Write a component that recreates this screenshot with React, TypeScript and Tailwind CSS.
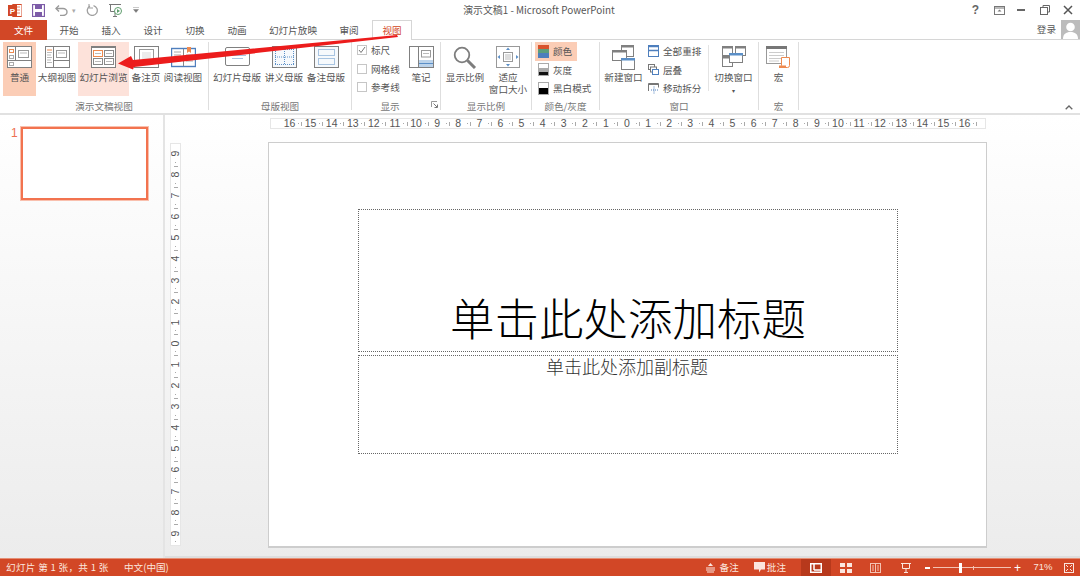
import React from "react";

const G = "#808080";
const O = "#ee8a4f";
const B = "#5b8fc7";

function Ico({ w = 25, h = 22, children }: { w?: number; h?: number; children: React.ReactNode }) {
  return (
    <svg width={w} height={h} viewBox={`0 0 ${w} ${h}`} className="block shrink-0" fill="none">
      {children}
    </svg>
  );
}

const Frame = () => <rect x="0.5" y="0.5" width="24" height="21" fill="#fff" stroke={G} />;

const icons: Record<string, React.ReactNode> = {
  normal: (
    <Ico>
      <Frame />
      <path d="M8.5 1v13M1 14.5h23" stroke={G} />
      <rect x="2.5" y="3.5" width="4" height="3" stroke={O} />
      <rect x="2.5" y="9.5" width="4" height="3" stroke="#aaa" />
      <rect x="2.5" y="16.5" width="4" height="3" stroke="#aaa" />
      <rect x="11.5" y="4.5" width="10" height="7" stroke="#999" />
      <path d="M13 7h7" stroke="#bbb" />
    </Ico>
  ),
  outline: (
    <Ico>
      <Frame />
      <path d="M8.5 1v20M9 14.5h15" stroke={G} />
      <path d="M2 4h5" stroke={O} />
      <path d="M2 6.5h5M2 9h4M2 11.5h5M2 14h4M2 16.5h5" stroke="#bbb" />
      <rect x="11.5" y="4.5" width="10" height="7" stroke="#999" />
      <path d="M13 7h7" stroke="#bbb" />
    </Ico>
  ),
  sorter: (
    <Ico>
      <rect x="0.5" y="0.5" width="24" height="21" fill="#fff" stroke={G} />
      <rect x="0" y="0" width="25" height="2" fill={G} />
      <rect x="2.5" y="4.5" width="9" height="6" stroke={O} />
      <rect x="13.5" y="4.5" width="9" height="6" stroke="#888" />
      <rect x="2.5" y="12.5" width="9" height="6" stroke="#888" />
      <rect x="13.5" y="12.5" width="9" height="6" stroke="#888" />
      <path d="M4 7.5h6M15 7.5h6M4 15.5h6M15 15.5h6" stroke="#bbb" />
    </Ico>
  ),
  notes: (
    <Ico>
      <Frame />
      <rect x="5.5" y="3.5" width="14" height="12" stroke="#999" />
      <rect x="8" y="6" width="9" height="7" fill="#ececec" />
    </Ico>
  ),
  reading: (
    <Ico>
      <rect x="0.5" y="2.5" width="24" height="18" fill="#fff" stroke="#4f7fbd" strokeWidth="1.4" />
      <path d="M12.5 3v17" stroke="#888" />
      <path d="M3 6h7M3 9h7M3 12h7M3 15h7M15 9h7M15 12h7M15 15h7" stroke="#aaa" />
      <path d="M16 1h4v6l-2-1.5L16 7z" fill={O} />
    </Ico>
  ),
  master: (
    <Ico>
      <rect x="0.5" y="1.5" width="24" height="18" rx="1.5" fill="#fff" stroke={G} />
      <path d="M4 6h17" stroke={B} />
      <path d="M4 9.5h17M7 12.5h11" stroke="#a9c4e2" />
    </Ico>
  ),
  handout: (
    <Ico>
      <rect x="0.5" y="0.5" width="24" height="21" fill="#f6f9fc" stroke={G} />
      <path d="M3.5 3v16M12.5 3v16M21.5 3v16M3 3.5h19M3 11h19M3 18.5h19" stroke={B} strokeDasharray="1 1" />
    </Ico>
  ),
  notesMaster: (
    <Ico>
      <rect x="0.5" y="0.5" width="24" height="21" fill="#f6f9fc" stroke={G} />
      <rect x="4.5" y="3.5" width="16" height="6" stroke={B} strokeDasharray="1 1" />
      <rect x="4.5" y="12.5" width="16" height="6" stroke={B} strokeDasharray="1 1" />
    </Ico>
  ),
  note: (
    <Ico>
      <Frame />
      <path d="M9.5 1v20" stroke={G} />
      <rect x="10" y="14" width="14" height="7" fill="#bcd3ea" />
      <path d="M10 17.5h14" stroke={B} />
      <rect x="12.5" y="4.5" width="9" height="6.5" stroke="#999" />
      <path d="M14 7.5h6" stroke="#bbb" />
    </Ico>
  ),
  zoom: (
    <Ico w={24} h={23}>
      <circle cx="9" cy="9" r="7.3" stroke="#7d7d7d" strokeWidth="1.8" fill="#fff" />
      <path d="M14.5 14.5l7.5 7.5" stroke="#7d7d7d" strokeWidth="3" />
    </Ico>
  ),
  fit: (
    <Ico w={24} h={22}>
      <rect x="0.5" y="0.5" width="23" height="21" fill="#fff" stroke="#999" />
      <rect x="7.5" y="6.5" width="9" height="9" stroke="#999" />
      <path d="M9 9h6M9 11h6M9 13h6" stroke="#bbb" />
      <path d="M12 1.5l2 2.5h-4zM12 20.5l2-2.500h-4zM1.500 11l2.500-2v4zM22.500 11l-2.500-2v4z" fill={B} />
    </Ico>
  ),
  newWin: (
    <Ico w={23} h={25}>
      <rect x="9.500" y="0.500" width="12" height="11" fill="#fff" stroke={G} />
      <rect x="9" y="0" width="13" height="2.500" fill={G} />
      <rect x="0.500" y="5.500" width="14" height="10" fill="#fff" stroke={G} />
      <rect x="0" y="5" width="15" height="2.500" fill={G} />
      <rect x="9.500" y="13.500" width="13" height="11" fill="#fff" stroke={G} />
      <rect x="9" y="13" width="14" height="2.500" fill={B} />
    </Ico>
  ),
  switchWin: (
    <Ico w={24} h={21}>
      <rect x="0.500" y="0.500" width="10" height="9" fill="#fff" stroke={G} />
      <rect x="0" y="0" width="11" height="2.500" fill={G} />
      <rect x="13.500" y="0.500" width="10" height="9" fill="#fff" stroke={G} />
      <rect x="13" y="0" width="11" height="2.500" fill={G} />
      <rect x="0.500" y="10.500" width="10" height="10" fill="#fff" stroke={G} />
      <rect x="0" y="10" width="11" height="2.500" fill={G} />
      <rect x="7.500" y="7.500" width="13" height="9" fill="#fff" stroke={G} />
      <rect x="7" y="7" width="14" height="2.500" fill={B} />
    </Ico>
  ),
  macro: (
    <Ico w={25} h={22}>
      <rect x="0.500" y="0.500" width="20" height="17" fill="#fff" stroke="#999" />
      <rect x="0" y="0" width="21" height="3" fill="#777" />
      <path d="M3 6.500h15M3 9.500h15M3 12.500h12M3 15h10" stroke="#ccc" />
      <path d="M15.500 11.500h8v8q0 2-2 2h-8q2-.5 2-2z" fill="#fff" stroke={O} />
      <rect x="13" y="19.500" width="7" height="2.500" fill={O} />
    </Ico>
  ),
};

function Big({
  w,
  label,
  icon,
  bg = "",
  second,
}: {
  w: string;
  label: string;
  icon: string;
  bg?: string;
  second?: string;
}) {
  return (
    <div className={`${w} ${bg} h-[54px] shrink-0 flex flex-col items-center pt-[4px]`}>
      <div className="h-[22px] flex items-center justify-center">{icons[icon]}</div>
      <div className="mt-[3px] leading-[12px] whitespace-nowrap">{label}</div>
      {second ? <div className="leading-[12px] whitespace-nowrap">{second}</div> : null}
    </div>
  );
}

function Group({
  w,
  label,
  labelClass = "",
  children,
}: {
  w: string;
  label: string;
  labelClass?: string;
  children: React.ReactNode;
}) {
  return (
    <div className={`${w} shrink-0 h-[68px] flex flex-col relative border-r border-[#dedede]`}>
      <div className="h-[57px] flex shrink-0">{children}</div>
      <div className={`mt-auto mb-[1px] leading-[14px] text-center text-[#777] ${labelClass}`}>{label}</div>
    </div>
  );
}

function Check({ label, checked }: { label: string; checked?: boolean }) {
  return (
    <div className="h-[18.500px] flex items-center gap-[4px] whitespace-nowrap">
      <span className="w-[10px] h-[10px] border border-[#c6c6c6] flex items-center justify-center">
        {checked ? (
          <svg width="8" height="8" viewBox="0 0 8 8" fill="none">
            <path d="M1 4l2 2.500L7 1" stroke="#777" strokeWidth="1" />
          </svg>
        ) : null}
      </span>
      {label}
    </div>
  );
}

function Swatch({ stops, border = "" }: { stops: [string, number][]; border?: string }) {
  return (
    <span className={`w-[11px] h-[13px] flex flex-col shrink-0 ${border}`}>
      {stops.map(([c, f], i) => (
        <span key={i} style={{ background: c, flex: f }} />
      ))}
    </span>
  );
}

function SmallRow({ icon, label, bg = "", w = "" }: { icon: React.ReactNode; label: string; bg?: string; w?: string }) {
  return (
    <div className={`h-[18.500px] flex items-center gap-[4px] whitespace-nowrap ${bg} ${w}`}>
      {icon}
      {label}
    </div>
  );
}

const HNums = [16, 15, 14, 13, 12, 11, 10, 9, 8, 7, 6, 5, 4, 3, 2, 1, 0, 1, 2, 3, 4, 5, 6, 7, 8, 9, 10, 11, 12, 13, 14, 15, 16];
const VNums = [9, 8, 7, 6, 5, 4, 3, 2, 1, 0, 1, 2, 3, 4, 5, 6, 7, 8, 9];

function HRuler() {
  return (
    <div className="w-[716px] h-[11px] ml-[105px] bg-white border border-[#e6e6e6] flex items-center pl-[12px] overflow-hidden">
      {HNums.map((n, i) => (
        <React.Fragment key={i}>
          <span className="w-[13px] shrink-0 text-center">{n}</span>
          <span className="w-[8.100px] shrink-0 flex items-center justify-around px-[1px]">
            <span className="w-px h-[1px] bg-[#aaa]" />
            <span className="w-px h-[4px] bg-[#aaa]" />
          </span>
        </React.Fragment>
      ))}
    </div>
  );
}

function VRuler() {
  return (
    <div className="w-[11px] h-[403px] ml-[5px] bg-white border border-[#e6e6e6] flex flex-col items-center pt-[4px] shrink-0 overflow-hidden">
      {VNums.map((n, i) => (
        <React.Fragment key={i}>
          <span className="h-[11px] shrink-0 -rotate-90 leading-[11px]">{n}</span>
          <span className="h-[10.100px] shrink-0 flex flex-col items-center justify-around py-[1px]">
            <span className="w-[1px] h-px bg-[#aaa]" />
            <span className="w-[4px] h-px bg-[#aaa]" />
          </span>
        </React.Fragment>
      ))}
    </div>
  );
}

const cjk = "font-['Microsoft_YaHei','Noto_Sans_CJK_SC','Liberation_Sans',sans-serif]";

export default function App() {
  return (
    <div className={`relative w-[1080px] h-[576px] overflow-hidden bg-white flex flex-col text-[9.600px] text-[#555] ${cjk}`}>
      {/* Title bar */}
      <div className="h-[20px] shrink-0 grid grid-cols-[1fr_auto_1fr] items-center">
        <div className="flex items-center pl-[8px]">
          <svg width="14" height="13" viewBox="0 0 14 13" className="shrink-0">
            <rect x="4" y="0.500" width="10" height="12" rx="1" fill="#fff" stroke="#d24726" />
            <path d="M9 3h3M9 6h3M9 9h3" stroke="#e58a6e" />
            <rect x="0" y="1" width="9" height="11" fill="#d24726" />
            <text x="4.500" y="9.500" fontSize="8" fontWeight="700" fill="#fff" textAnchor="middle" fontFamily="Liberation Sans">P</text>
          </svg>
          <svg width="13" height="13" viewBox="0 0 13 13" className="ml-[10px] shrink-0">
            <rect x="0.500" y="0.500" width="12" height="12" fill="#fff" stroke="#7d5ca8" strokeWidth="1.300" />
            <rect x="3" y="1" width="7" height="4" fill="#7d5ca8" />
            <rect x="3" y="8" width="7" height="4.500" fill="#7d5ca8" />
          </svg>
          <svg width="13" height="11" viewBox="0 0 13 11" fill="none" className="ml-[10px] shrink-0">
            <path d="M1 3.500h7a4 3.500 0 010 7H5" stroke="#9a9a9a" strokeWidth="1.400" />
            <path d="M4 0.500L1 3.500l3 3" stroke="#9a9a9a" strokeWidth="1.400" />
          </svg>
          <span className="ml-[4px] text-[#aaa] text-[7px]">▾</span>
          <svg width="12" height="12" viewBox="0 0 12 12" fill="none" className="ml-[10px] shrink-0">
            <path d="M7.500 1.600A5 5 0 114 2" stroke="#a0a0a0" strokeWidth="1.300" />
            <path d="M3 0v4h4" stroke="#a0a0a0" strokeWidth="1.100" />
          </svg>
          <svg width="15" height="14" viewBox="0 0 15 14" fill="none" className="ml-[11px] shrink-0">
            <path d="M0 1.500h12M1.500 2v6.500h9M4 13.500h4M6 9v4" stroke="#777" />
            <circle cx="9" cy="8" r="3.500" fill="#fff" stroke="#5f9e6e" />
            <path d="M8 6l3 2-3 2z" fill="#5f9e6e" />
          </svg>
          <svg width="6" height="6" viewBox="0 0 6 6" className="ml-[9px] shrink-0">
            <path d="M0 .5h6M0.500 2.500h5L3 5.500z" fill="#777" stroke="#777" strokeWidth=".4" />
          </svg>
        </div>
        <div className="text-[9.900px] text-[#555] -translate-x-[1px]">演示文稿1 - Microsoft PowerPoint</div>
        <div className="flex items-center justify-end pr-[7px]">
          <span className="text-[12px] font-bold text-[#666] leading-none font-['Liberation_Sans',sans-serif]">?</span>
          <svg width="11" height="9" viewBox="0 0 11 9" fill="none" className="ml-[15px]">
            <rect x="0.500" y="0.500" width="10" height="8" stroke="#777" />
            <path d="M1 2h9" stroke="#777" />
            <path d="M5.500 3.500l2 2h-4z" fill="#777" />
          </svg>
          <span className="w-[8px] h-[1.500px] bg-[#666] ml-[12px]" />
          <svg width="10" height="10" viewBox="0 0 10 10" fill="none" className="ml-[15px]">
            <rect x="0.500" y="2.500" width="7" height="7" fill="#fff" stroke="#666" />
            <path d="M3 2V.500h6.500V7H8" stroke="#666" />
          </svg>
          <svg width="10" height="10" viewBox="0 0 10 10" fill="none" className="ml-[13px]">
            <path d="M1 1l8 8M9 1L1 9" stroke="#555" strokeWidth="1.500" />
          </svg>
        </div>
      </div>

      {/* Tabs */}
      <div className="h-[20px] shrink-0 flex items-stretch border-b border-[#d6d6d6]">
        <div className="w-[47px] h-[20px] bg-[#d24726] text-white text-center leading-[20px]">文件</div>
        <div className="flex ml-[1px]">
          {[
            ["开始", "w-[42px]"],
            ["插入", "w-[42px]"],
            ["设计", "w-[42px]"],
            ["切换", "w-[42px]"],
            ["动画", "w-[42px]"],
            ["幻灯片放映", "w-[70px]"],
            ["审阅", "w-[42px]"],
          ].map(([t, w]) => (
            <div key={t} className={`${w} text-center leading-[20px] text-[#555]`}>{t}</div>
          ))}
        </div>
        <div className="w-[40px] ml-[2px] h-[20px] bg-white border border-b-0 border-[#d6d6d6] text-[#d24726] text-center leading-[19px]">视图</div>
        <div className="ml-auto flex items-center self-start h-[19px]">
          <span className="mr-[5px] text-[#555]">登录</span>
          <div className="w-[19px] h-[19px] bg-[#bcbcbc] overflow-hidden">
            <svg width="19" height="19" viewBox="0 0 19 19">
              <circle cx="9.500" cy="7" r="4.300" fill="#fff" />
              <path d="M2 19c0-5 3-7 7.500-7s7.500 2 7.500 7z" fill="#fff" />
            </svg>
          </div>
        </div>
      </div>

      {/* Ribbon */}
      <div className="h-[75px] shrink-0 bg-white border-b-2 border-[#e1e1e1] flex pt-[2px] relative">
        <Group w="w-[209px]" label="演示文稿视图">
          <div className="flex pl-[3px] gap-[2px]">
            <Big w="w-[33px]" label="普通" icon="normal" bg="bg-[#fbcdb6]" />
            <Big w="w-[38px]" label="大纲视图" icon="outline" />
            <Big w="w-[51px]" label="幻灯片浏览" icon="sorter" bg="bg-[#fde2da]" />
            <Big w="w-[30px]" label="备注页" icon="notes" />
            <Big w="w-[40px]" label="阅读视图" icon="reading" />
          </div>
        </Group>
        <Group w="w-[143px]" label="母版视图">
          <div className="flex pl-[4px] gap-[4px]">
            <Big w="w-[48px]" label="幻灯片母版" icon="master" />
            <Big w="w-[38px]" label="讲义母版" icon="handout" />
            <Big w="w-[38px]" label="备注母版" icon="notesMaster" />
          </div>
        </Group>
        <Group w="w-[89px]" label="显示" labelClass="pr-[12px]">
          <div className="flex pl-[5px]">
            <div className="w-[52px] -mt-[1px] flex flex-col">
              <Check label="标尺" checked />
              <Check label="网格线" />
              <Check label="参考线" />
            </div>
            <Big w="w-[24px]" label="笔记" icon="note" />
          </div>
          <svg width="7" height="7" viewBox="0 0 7 7" fill="none" className="absolute right-[2px] bottom-[2px]">
            <path d="M.5 6V.5H6" stroke="#999" />
            <path d="M2.500 2.500L6 6M6.500 3.500v3h-3" stroke="#777" />
          </svg>
        </Group>
        <Group w="w-[91px]" label="显示比例">
          <div className="flex pl-[5px]">
            <Big w="w-[38px]" label="显示比例" icon="zoom" />
            <div className="ml-[4px]">
              <Big w="w-[40px]" label="适应" second="窗口大小" icon="fit" />
            </div>
          </div>
        </Group>
        <Group w="w-[68px]" label="颜色/灰度">
          <div className="flex flex-col pl-[3px]">
            <SmallRow
              w="w-[42px]"
              bg="bg-[#fbcdb6] pl-[3px]"
              label="颜色"
              icon={<Swatch stops={[["#d9532c", 1], ["#5d9e7c", 1], ["#4e7fbd", 1]]} />}
            />
            <SmallRow bg="pl-[3px]" label="灰度" icon={<Swatch border="border border-[#aaa]" stops={[["#fff", 1], ["#aaa", 1], ["#111", 1]]} />} />
            <SmallRow bg="pl-[3px]" label="黑白模式" icon={<Swatch border="border border-[#aaa]" stops={[["#fff", 1], ["#000", 1]]} />} />
          </div>
        </Group>
        <Group w="w-[159px]" label="窗口">
          <div className="flex">
            <div className="w-[47px] h-[54px] flex flex-col items-center pt-[3px]">
              <div className="h-[25px]">{icons.newWin}</div>
              <div className="mt-[1px] leading-[12px] whitespace-nowrap">新建窗口</div>
            </div>
            <div className="w-[61px] pl-[1px] flex flex-col">
              <SmallRow
                label="全部重排"
                icon={
                  <svg width="11" height="12" viewBox="0 0 11 12" fill="none">
                    <rect x=".5" y=".5" width="10" height="11" stroke="#4e7fbd" />
                    <path d="M1 5.500h9" stroke="#4e7fbd" strokeWidth="1.500" />
                    <path d="M1 1.500h9" stroke="#4e7fbd" strokeWidth="1.500" />
                  </svg>
                }
              />
              <SmallRow
                label="层叠"
                icon={
                  <svg width="11" height="11" viewBox="0 0 11 11" fill="none">
                    <rect x=".5" y=".5" width="6" height="5" fill="#fff" stroke="#777" />
                    <rect x="2.500" y="3" width="6" height="5" fill="#fff" stroke="#777" />
                    <rect x="4.500" y="5.500" width="6" height="5" fill="#fff" stroke="#4e7fbd" />
                  </svg>
                }
              />
              <SmallRow
                label="移动拆分"
                icon={
                  <svg width="12" height="11" viewBox="0 0 12 11" fill="none" className="-mr-[1px]">
                    <path d="M.5 8V.5h10v4" stroke="#777" />
                    <path d="M1 1.500h9" stroke="#777" />
                    <path d="M6 3.500v7M3 7h8" stroke="#4e7fbd" strokeDasharray="1 1" />
                  </svg>
                }
              />
            </div>
            <div className="w-px h-[46px] mt-[3px] bg-[#e4e4e4]" />
            <div className="w-[49px] h-[54px] flex flex-col items-center pt-[4px]">
              <div className="h-[22px]">{icons.switchWin}</div>
              <div className="mt-[3px] leading-[12px] whitespace-nowrap">切换窗口</div>
              <div className="text-[6px] leading-[6px] mt-[5px]">▾</div>
            </div>
          </div>
        </Group>
        <Group w="w-[40px]" label="宏">
          <div className="w-[39px] h-[54px] flex flex-col items-center pt-[4px]">
            <div className="h-[22px]">{icons.macro}</div>
            <div className="mt-[3px] leading-[12px]">宏</div>
          </div>
        </Group>
        <div className="ml-auto self-end mr-[7px] mb-[3px]">
          <svg width="8" height="5" viewBox="0 0 8 5" fill="none">
            <path d="M.7 4.300L4 1l3.300 3.300" stroke="#666" strokeWidth="1.300" />
          </svg>
        </div>
      </div>

      {/* Main area */}
      <div className="flex-1 min-h-0 flex bg-gradient-to-b from-white to-[#ececec]">
        <div className="w-[163px] shrink-0 flex items-start pt-[12px] pl-[11px]">
          <span className="w-[10px] text-[12px] leading-[14px] -mt-[1px] text-[#ee7050] font-['Liberation_Sans',sans-serif]">1</span>
          <div className="w-[127px] h-[73px] bg-white border-2 border-[#f2734f] ring-1 ring-[#f9c0ae]" />
        </div>
        <div className="w-[2px] shrink-0 bg-[#e4e4e4]" />
        <div className="flex-1 min-w-0 flex flex-col">
          <div className="flex-1 pt-[3px] text-[#555] font-['Liberation_Sans',sans-serif] text-[10.500px] leading-[9px]">
            <HRuler />
            <div className="flex mt-[14px]">
              <VRuler />
              <div className={`ml-[87px] -mt-[1px] w-[719px] h-[406px] bg-white border border-[#cdcdcd] border-b-2 flex flex-col pt-[66px] pl-[89px] text-black ${cjk}`}>
                <div className="w-[540px] h-[143px] border border-dotted border-[#666] flex items-end justify-center pb-[4px]">
                  <span className="text-[44.500px] leading-[60px] font-light whitespace-nowrap">单击此处添加标题</span>
                </div>
                <div className="w-[540px] h-[99px] mt-[3px] border border-dotted border-[#666] flex justify-center">
                  <span className="text-[18px] leading-[20px] font-light text-[#333] whitespace-nowrap -translate-x-[1px]">单击此处添加副标题</span>
                </div>
              </div>
            </div>
          </div>
          <div className="h-[2px] bg-[#dedede] shrink-0" />
        </div>
      </div>

      {/* Status bar */}
      <div className="h-[18px] shrink-0 bg-[#d24726] border-t border-[#e58f75] text-[#fbe6df] flex items-center pl-[6px]">
        <span className="w-[118px] whitespace-nowrap tracking-[.3px]">幻灯片 第 1 张，共 1 张</span>
        <span className="whitespace-nowrap">中文(中国)</span>
        <div className="ml-auto flex items-center h-full">
          <svg width="9" height="10" viewBox="0 0 9 10" fill="none">
            <path d="M4.500 0l2.500 3h-5z" fill="#fbe6df" />
            <path d="M0 5h9M0 7h9M1 9h7" stroke="#fbe6df" />
          </svg>
          <span className="ml-[5px]">备注</span>
          <svg width="11" height="11" viewBox="0 0 11 11" className="ml-[15px]">
            <path d="M0 0h11v7.500H7L5 10.500V7.500H0z" fill="#fbe6df" />
          </svg>
          <span className="ml-[2px]">批注</span>
          <div className="w-[30px] h-full bg-[#b7391c] ml-[15px] flex items-center justify-center">
            <svg width="12" height="10" viewBox="0 0 12 10" fill="none">
              <rect x=".75" y=".75" width="10.500" height="8.500" stroke="#fff" strokeWidth="1.500" />
              <path d="M4 1v6M4 7h7" stroke="#fff" strokeWidth="1.500" />
            </svg>
          </div>
          <div className="w-[30px] flex justify-center">
            <svg width="12" height="10" viewBox="0 0 12 10" fill="#fbe6df">
              <rect width="5" height="4" /><rect x="7" width="5" height="4" /><rect y="6" width="5" height="4" /><rect x="7" y="6" width="5" height="4" />
            </svg>
          </div>
          <div className="w-[30px] flex justify-center">
            <svg width="11" height="10" viewBox="0 0 11 10" fill="none" stroke="#f4c2b2">
              <rect x=".5" y=".5" width="10" height="9" />
              <path d="M5.500 0v10M2 3h2M2 5h2M2 7h2M7 3h2M7 5h2M7 7h2" />
            </svg>
          </div>
          <div className="w-[30px] flex justify-center">
            <svg width="10" height="10" viewBox="0 0 10 10" fill="none" stroke="#fbe6df">
              <path d="M0 .5h10M1.500 1v4.500h7V1M5 6v3.500M3 9.500h4" />
            </svg>
          </div>
          <div className="flex items-center ml-[4px]">
            <span className="w-[5px] h-[2px] bg-white" />
            <div className="w-[78px] h-px bg-[#f4c2b2] mx-[3px] flex items-center relative">
              <span className="absolute left-[26px] w-[3px] h-[10px] bg-white" />
              <span className="absolute left-[40px] w-px h-[4px] bg-[#f4c2b2]" />
            </div>
            <span className="text-white text-[12px] leading-none font-['Liberation_Sans',sans-serif]">+</span>
          </div>
          <span className="ml-[12px] w-[20px] text-[9.500px] text-center font-['Liberation_Sans',sans-serif]">71%</span>
          <svg width="10" height="10" viewBox="0 0 10 10" fill="none" stroke="#fbe6df" className="ml-[11px] mr-[6px]">
            <rect x=".5" y=".5" width="9" height="9" />
            <path d="M2 2l2 2M8 2L6 4M2 8l2-2M8 8L6 6" />
          </svg>
        </div>
      </div>

      {/* Red arrow annotation over the ribbon */}
      <svg width="1080" height="576" viewBox="0 0 1080 576" className="absolute inset-0 pointer-events-none" fill="none">
        <path d="M397 35L398 37L134 67L133 69.500L118 63.500L131 56L133 60Z" fill="#ec1c1c" />
      </svg>
    </div>
  );
}
